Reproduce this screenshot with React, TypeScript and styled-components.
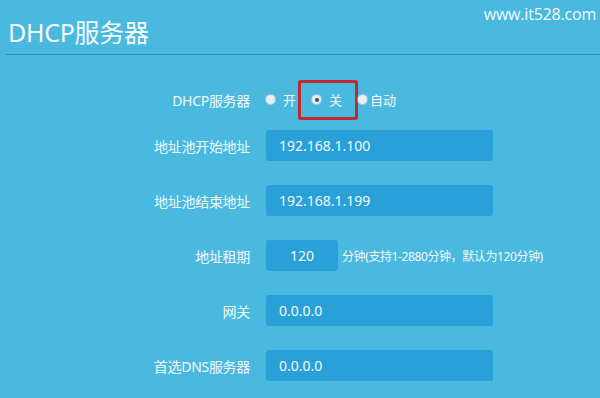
import React from 'react';
import styled, { createGlobalStyle } from 'styled-components';

const GlobalStyle = createGlobalStyle`
  html, body {
    margin: 0;
    padding: 0;
    background: #4ab9df;
  }
  body {
    font-family: 'Noto Sans', 'Noto Sans CJK SC', sans-serif;
    color: #f3f9fc;
  }
`;

const fields = [
  { label: '地址池开始地址', value: '192.168.1.100' },
  { label: '地址池结束地址', value: '192.168.1.199' },
  { label: '地址租期', value: '120', short: true, note: '分钟(支持1-2880分钟，默认为120分钟)' },
  { label: '网关', value: '0.0.0.0' },
  { label: '首选DNS服务器', value: '0.0.0.0' },
];

export default function App() {
  return (
    <Page>
      <GlobalStyle />
      <Watermark>www.it528.com</Watermark>
      <Header>
        <Title>DHCP服务器</Title>
      </Header>

      <Form>
        <Row $first>
          <Label>DHCP服务器</Label>
          <RadioGroup>
            <Option>
              <Radio />
              <span>开</span>
            </Option>
            <Highlight>
              <Option>
                <Radio $checked />
                <span>关</span>
              </Option>
            </Highlight>
            <Option $tight>
              <Radio />
              <span>自动</span>
            </Option>
          </RadioGroup>
        </Row>

        {fields.map((f) => (
          <Row key={f.label}>
            <Label>{f.label}</Label>
            <FieldWrap>
              <Input $short={f.short}>{f.value}</Input>
              {f.note && <Note>{f.note}</Note>}
            </FieldWrap>
          </Row>
        ))}
      </Form>
    </Page>
  );
}

const Page = styled.div`
  position: relative;
  width: 600px;
  height: 398px;
  overflow: hidden;
  background: #4ab9df;
`;

const Watermark = styled.div`
  position: absolute;
  top: 3px;
  right: 4px;
  font-family: 'Open Sans', 'Noto Sans', sans-serif;
  font-size: 16px;
  letter-spacing: -0.2px;
  color: #f4fafd;
`;

const Header = styled.div`
  margin-left: 6px;
  height: 55px;
  box-sizing: border-box;
  padding: 16px 0 0 2px;
  border-bottom: 1px solid #2a8dc5;
`;

const Title = styled.h1`
  margin: 0;
  font-size: 25px;
  line-height: 32px;
  font-weight: 400;
  letter-spacing: -0.3px;
  color: #f4fafd;
`;

const Form = styled.div`
  display: flex;
  flex-direction: column;
  gap: 24px;
  padding-top: 29px;
`;

const Row = styled.div<{ $first?: boolean }>`
  display: grid;
  grid-template-columns: 250px 1fr;
  grid-template-rows: 31px;
  column-gap: 16px;
  align-items: center;
  height: 31px;
  margin-bottom: ${(p) => (p.$first ? '-9px' : '0')};
`;

const Label = styled.div`
  text-align: right;
  font-size: 14px;
  letter-spacing: -0.3px;
  color: #f1f8fc;
`;

const RadioGroup = styled.div`
  display: flex;
  align-items: center;
  height: 31px;
  font-size: 13px;
`;

const Option = styled.label<{ $tight?: boolean }>`
  display: flex;
  align-items: center;
  gap: ${(p) => (p.$tight ? '3px' : '8px')};
`;

const Radio = styled.span<{ $checked?: boolean }>`
  display: inline-flex;
  align-items: center;
  justify-content: center;
  width: 9px;
  height: 9px;
  flex-shrink: 0;
  border-radius: 50%;
  background: #e9eef2;
  box-shadow: 0 0 0 1px rgba(200, 215, 225, 0.6);

  &::after {
    content: '';
    display: ${(p) => (p.$checked ? 'block' : 'none')};
    width: 4px;
    height: 4px;
    border-radius: 50%;
    background: #4a4f55;
  }
`;

const Highlight = styled.div`
  display: flex;
  align-items: center;
  flex-shrink: 0;
  height: 40px;
  box-sizing: border-box;
  margin-left: 2px;
  padding: 0 13px 0 11px;
  border: 3px solid #c3262c;
  border-radius: 3px;
`;

const FieldWrap = styled.div`
  display: flex;
  align-items: center;
  gap: 4px;
`;

const Input = styled.div<{ $short?: boolean }>`
  width: ${(p) => (p.$short ? '72px' : '227px')};
  height: 31px;
  box-sizing: border-box;
  padding-left: ${(p) => (p.$short ? '0' : '13px')};
  text-align: ${(p) => (p.$short ? 'center' : 'left')};
  line-height: 31px;
  font-size: 14px;
  background: #2aa0d8;
  border-radius: 3px;
  color: #f2f9fd;
`;

const Note = styled.span`
  font-size: 12px;
  letter-spacing: -0.4px;
  color: #f1f8fc;
`;
